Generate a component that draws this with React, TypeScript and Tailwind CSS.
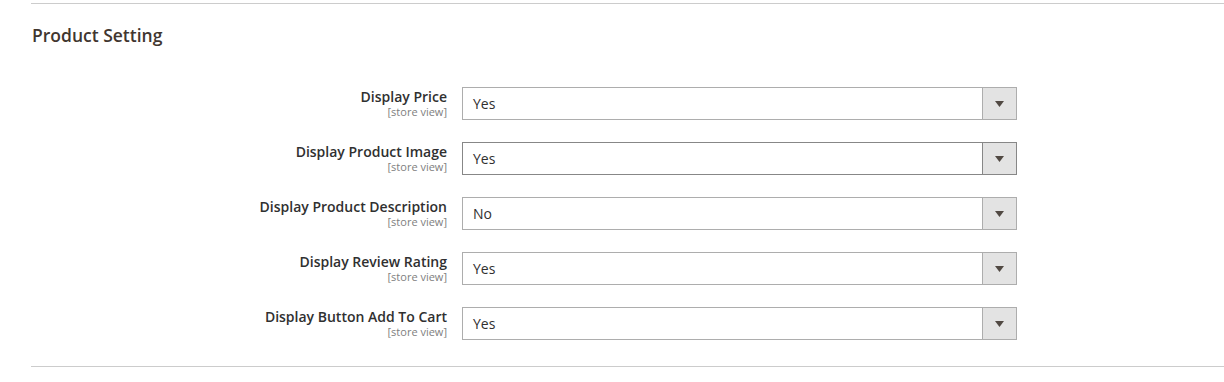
export default function App() {
  const rows = [
    { label: "Display Price", value: "Yes" },
    { label: "Display Product Image", value: "Yes", active: true },
    { label: "Display Product Description", value: "No" },
    { label: "Display Review Rating", value: "Yes" },
    { label: "Display Button Add To Cart", value: "Yes" },
  ];

  return (
    <div className="h-[382px] w-full bg-white pl-[31px] font-['Open_Sans',sans-serif] text-[#303030]">
      <div className="pt-[3px]">
        <div className="border-t border-[#cccccc]" />
      </div>

      {/* Section title */}
      <h2 className="ml-px pt-[19px] text-[17.5px] font-semibold leading-[24px] text-[#41362f]">
        Product Setting
      </h2>

      {/* Fields */}
      <div className="mt-[40px] flex flex-col gap-[22px]">
        {rows.map((row) => (
          <Field key={row.label} {...row} />
        ))}
      </div>

      <div className="mt-[26px] border-t border-[#cccccc]" />
    </div>
  );
}

function Field({ label, value, active }: { label: string; value: string; active?: boolean }) {
  return (
    <div className="flex items-start">
      <div className="w-[416px] pt-px text-right">
        <p className="text-[14px] font-semibold leading-[17px]">{label}</p>
        <p className="text-[11px] leading-[13px] text-[#808080]">[store view]</p>
      </div>

      <div
        className={
          active
            ? "ml-[15px] flex h-[33px] w-[555px] border border-[#878787] bg-white"
            : "ml-[15px] flex h-[33px] w-[555px] border border-[#adadad] bg-white"
        }
      >
        <div className="flex flex-1 items-center pl-[10px] text-[14px] text-[#303030]">{value}</div>
        <div
          className={
            active
              ? "flex w-[34px] items-center justify-center border-l border-[#878787] bg-[#e3e3e3]"
              : "flex w-[34px] items-center justify-center border-l border-[#adadad] bg-[#e3e3e3]"
          }
        >
          <svg width="9" height="6" viewBox="0 0 9 6">
            <path d="M0 0h9L4.5 6z" fill="#514943" />
          </svg>
        </div>
      </div>
    </div>
  );
}
